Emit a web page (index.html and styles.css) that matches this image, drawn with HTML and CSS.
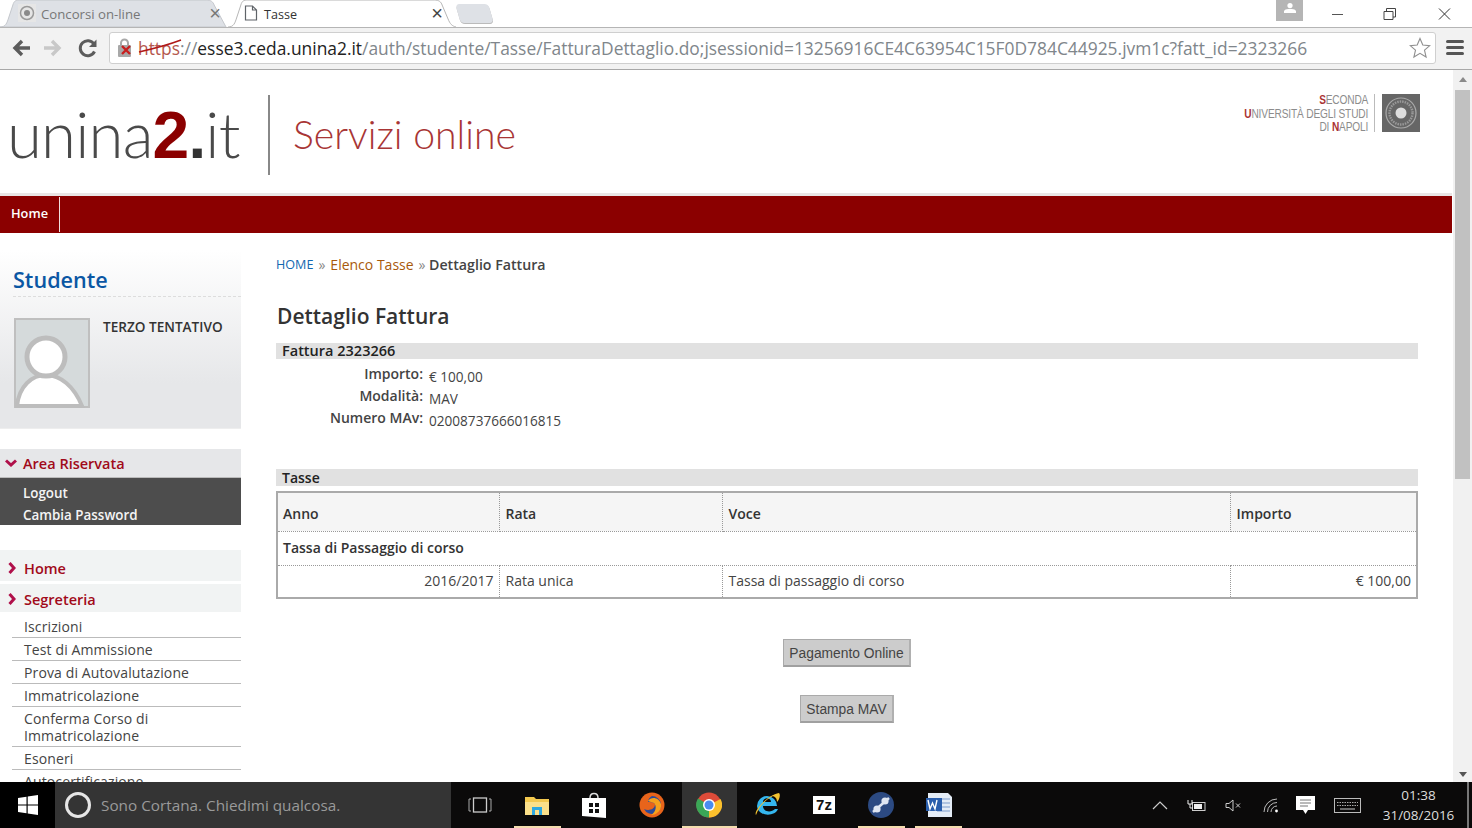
FILE: index.html
```html
<!DOCTYPE html>
<html lang="it">
<head>
<meta charset="utf-8">
<title>Tasse</title>
<link rel="stylesheet" href="styles.css">
</head>
<body>
<div class="tabstrip">
  <div class="tab tab-off">
    <svg class="tab-shape" viewBox="0 0 230 28" preserveAspectRatio="none"><path d="M0 28 C6 28 7 24 9 18 L13 6 C14 2 16 1 20 1 L208 1 C213 1 215 3 216 6 L228 28 Z" fill="#dee1e6" stroke="#c4c7cc"/></svg>
    <svg class="fav" width="18" height="18" viewBox="0 0 18 18"><rect width="18" height="18" fill="#e6e6e6"/><circle cx="9" cy="9" r="6.5" fill="none" stroke="#9a9a9a" stroke-width="1.5"/><circle cx="9" cy="9" r="3" fill="#8a8a8a"/></svg>
    <span class="tab-title">Concorsi on-line</span>
    <span class="tab-x">×</span>
  </div>
  <div class="tab tab-on">
    <svg class="tab-shape" viewBox="0 0 230 28" preserveAspectRatio="none"><path d="M0 28 C6 28 7 24 9 18 L13 6 C14 2 16 1 20 1 L208 1 C213 1 215 3 216 6 L222 20 C224 25 226 27 230 28" fill="#fff" stroke="#b5b5b5"/></svg>
    <svg class="fav" width="14" height="16" viewBox="0 0 14 16"><path d="M1.5 1 H8.5 L12.5 5 V15 H1.5 Z M8.5 1 V5 H12.5" fill="#fff" stroke="#5f6368" stroke-width="1.2"/></svg>
    <span class="tab-title">Tasse</span>
    <span class="tab-x">×</span>
  </div>
  <div class="newtab"></div>
  <div class="winctl">
    <div class="profile"><svg width="12" height="10" viewBox="0 0 12 10"><circle cx="6" cy="2.6" r="2.6" fill="#fff"/><path d="M0 10 V8 C1 6 4 6 6 6 S11 6 12 8 V10 Z" fill="#fff"/></svg></div>
    <svg class="ctl" width="53" height="28" viewBox="0 0 53 28"><path d="M21 14.5 H32" stroke="#555"/></svg>
    <svg class="ctl" width="53" height="28" viewBox="0 0 53 28"><path d="M20 11.5 H29 V19.5 H20 Z M22.5 11 V8.5 H31.5 V17 H29" fill="none" stroke="#444"/></svg>
    <svg class="ctl" width="53" height="28" viewBox="0 0 53 28"><path d="M22 8.5 L33 19.5 M33 8.5 L22 19.5" stroke="#333"/></svg>
  </div>
</div>

<div class="toolbar">
  <svg class="nav-ico" width="32" height="24" viewBox="0 0 24 24"><path d="M21 12 H7 M13 5 L6 12 L13 19" fill="none" stroke="#5c5c5c" stroke-width="3.4"/></svg>
  <svg class="nav-ico" width="32" height="24" viewBox="0 0 24 24"><path d="M3 12 H17 M11 5 L18 12 L11 19" fill="none" stroke="#c8c8c8" stroke-width="3.4"/></svg>
  <svg class="nav-ico nav-reload" width="32" height="24" viewBox="0 0 24 24"><path d="M18.5 15.5 A7.5 7.5 0 1 1 18 8" fill="none" stroke="#5c5c5c" stroke-width="3"/><path d="M20.5 3.5 V11 H13 Z" fill="#5c5c5c"/></svg>
  <div class="omnibox">
    <span class="lock">
      <svg width="18" height="20" viewBox="0 0 18 20"><rect x="1" y="7" width="13" height="12" rx="1" fill="#a8a8a8"/><path d="M4 7 V5 A3.5 3.5 0 0 1 11 5 V7" fill="none" stroke="#a8a8a8" stroke-width="2"/><path d="M5 8 L13 16 M13 8 L5 16" stroke="#c81e1e" stroke-width="2.4"/></svg>
    </span>
    <span class="url"><span class="scheme"><span class="scheme-red">https</span>://</span><span class="host">esse3.ceda.unina2.it</span>/auth/studente/Tasse/FatturaDettaglio.do;jsessionid=13256916CE4C63954C15F0D784C44925.jvm1c?fatt_id=2323266</span>
    <svg class="strike" width="44" height="14" viewBox="0 0 44 14"><path d="M1 13 C14 10 30 6 43 1" fill="none" stroke="#b01818" stroke-width="1.5"/></svg>
    <svg class="star" width="22" height="22" viewBox="0 0 22 22"><path d="M11 1.5 L13.8 8 L20.8 8.6 L15.5 13.2 L17.1 20 L11 16.4 L4.9 20 L6.5 13.2 L1.2 8.6 L8.2 8 Z" fill="#fff" stroke="#8f8f8f" stroke-width="1.1"/></svg>
  </div>
  <div class="menu"><i></i><i></i><i></i></div>
</div>

<div class="viewport">
  <div class="page">
    <header class="site-head">
      <div class="brand">
        <span class="logo">unina<b>2</b><span class="logo-dot">.</span>it</span>
        <span class="brand-sep"></span>
        <span class="brand-sub">Servizi online</span>
      </div>
      <div class="univ">
        <div class="univ-text"><span><em>S</em>ECONDA</span><span><em>U</em>NIVERSITÀ DEGLI STUDI</span><span>DI <em>N</em>APOLI</span></div>
        <span class="univ-sep"></span>
        <svg class="seal" width="38" height="38" viewBox="0 0 38 38"><rect width="38" height="38" fill="#666"/><circle cx="19" cy="19" r="15" fill="none" stroke="#aaa" stroke-width="1.2"/><circle cx="19" cy="19" r="11.5" fill="none" stroke="#999" stroke-width="2.4" stroke-dasharray="1.5 1"/><circle cx="19" cy="19" r="5.5" fill="#ddd"/></svg>
      </div>
    </header>
    <nav class="mainnav"><a class="mainnav-item">Home</a></nav>

    <div class="columns">
      <aside class="sidebar">
        <section class="student">
          <h2>Studente</h2>
          <div class="student-body">
            <svg class="avatar" width="76" height="90" viewBox="0 0 76 90"><rect x="1" y="1" width="74" height="88" fill="#d5dadb" stroke="#bfbfbf" stroke-width="2"/><path d="M3 88 C5 68 18 57 32 57 C46 57 60 68 68 88 Z" fill="#fff" stroke="#bdbdbd" stroke-width="4"/><circle cx="32" cy="39" r="19" fill="#fff" stroke="#bdbdbd" stroke-width="5"/></svg>
            <span class="student-name">TERZO TENTATIVO</span>
          </div>
        </section>

        <section class="area">
          <div class="area-head"><svg width="12" height="8" viewBox="0 0 12 8"><path d="M1 1.5 L6 6 L11 1.5" fill="none" stroke="#b0104a" stroke-width="3"/></svg>Area Riservata</div>
          <ul class="area-list"><li>Logout</li><li>Cambia Password</li></ul>
        </section>

        <div class="menu-head menu-home"><svg width="8" height="12" viewBox="0 0 8 12"><path d="M1.5 1 L6 6 L1.5 11" fill="none" stroke="#b0104a" stroke-width="3"/></svg>Home</div>
        <div class="menu-head"><svg width="8" height="12" viewBox="0 0 8 12"><path d="M1.5 1 L6 6 L1.5 11" fill="none" stroke="#b0104a" stroke-width="3"/></svg>Segreteria</div>
        <ul class="sub">
          <li>Iscrizioni</li>
          <li>Test di Ammissione</li>
          <li>Prova di Autovalutazione</li>
          <li>Immatricolazione</li>
          <li>Conferma Corso di Immatricolazione</li>
          <li>Esoneri</li>
          <li>Autocertificazione</li>
        </ul>
      </aside>

      <main class="content">
        <div class="crumbs"><a class="c-home">HOME</a><span class="c-sep">»</span><a class="c-link">Elenco Tasse</a><span class="c-sep">»</span><span class="c-now">Dettaglio Fattura</span></div>
        <h1>Dettaglio Fattura</h1>
        <div class="bar">Fattura 2323266</div>
        <dl class="fields">
          <dt>Importo:</dt><dd>€ 100,00</dd>
          <dt>Modalità:</dt><dd>MAV</dd>
          <dt>Numero MAv:</dt><dd>02008737666016815</dd>
        </dl>
        <div class="bar bar-tasse">Tasse</div>
        <table class="grid">
          <colgroup><col class="c1"><col class="c2"><col class="c3"><col class="c4"></colgroup>
          <thead><tr><th>Anno</th><th>Rata</th><th>Voce</th><th>Importo</th></tr></thead>
          <tbody>
            <tr class="group"><td colspan="4">Tassa di Passaggio di corso</td></tr>
            <tr class="item"><td class="num">2016/2017</td><td>Rata unica</td><td>Tassa di passaggio di corso</td><td class="num">€ 100,00</td></tr>
          </tbody>
        </table>
        <div class="actions">
          <button class="btn">Pagamento Online</button>
          <button class="btn">Stampa MAV</button>
        </div>
      </main>
    </div>
  </div>
  <div class="scrollbar">
    <span class="arrow up"></span>
    <div class="track"><div class="thumb"></div></div>
    <span class="arrow down"></span>
  </div>
</div>

<footer class="taskbar">
  <div class="start"><svg width="20" height="20" viewBox="0 0 20 20"><path d="M0 3 L8.5 1.8 V9.5 H0 Z M9.7 1.6 L20 0 V9.5 H9.7 Z M0 10.6 H8.5 V18.2 L0 17 Z M9.7 10.6 H20 V20 L9.7 18.4 Z" fill="#fff"/></svg></div>
  <div class="cortana"><span class="ring"></span><span class="cortana-text">Sono Cortana. Chiedimi qualcosa.</span></div>
  <div class="apps">
    <div class="app"><svg width="24" height="16" viewBox="0 0 24 16"><rect x="5.5" y="1" width="13" height="14" fill="none" stroke="#ccc" stroke-width="1.3"/><path d="M3 2 H1 V14 H3 M21 2 H23 V14 H21" fill="none" stroke="#aaa"/></svg></div>
    <div class="app app-run"><svg width="26" height="22" viewBox="0 0 26 22"><path d="M1 3 H10 L12 5 H25 V21 H1 Z" fill="#f4c94f"/><path d="M1 8 H25 V21 H1 Z" fill="#fbe08a"/><path d="M8 13 H18 V21 H15 V16 H11 V21 H8 Z" fill="#2ea8e0"/></svg></div>
    <div class="app"><svg width="26" height="28" viewBox="0 0 26 28"><path d="M9 7 C9 1 17 1 17 7" fill="none" stroke="#ddd" stroke-width="1.5"/><path d="M1 7 H25 V27 L1 25 Z" fill="#fff"/><path d="M8 12 H12 V16 H8 Z M14 12 H18 V16 H14 Z M8 18 H12 V22 H8 Z M14 18 H18 V22 H14 Z" fill="#111"/></svg></div>
    <div class="app"><svg width="26" height="26" viewBox="0 0 26 26"><circle cx="13" cy="13" r="12.5" fill="#e8641b"/><path d="M13 4 A9 9 0 1 1 5 17 C9 19 16 18 16 12 C14 10 11 10 9 10 C9 7 11 5 13 4 Z" fill="#2b4a9a"/><path d="M9 9 C12 4 20 5 22 12 C23 18 18 23 12 23 C17 20 18 14 15 11 Z" fill="#f6a11c"/></svg></div>
    <div class="app app-active"><svg width="26" height="26" viewBox="0 0 26 26"><circle cx="13" cy="13" r="12.5" fill="#dd4b39"/><path d="M13 13 L24.5 7 A12.5 12.5 0 0 1 13 25.5 Z" fill="#fbc02d"/><path d="M13 13 L13 25.5 A12.5 12.5 0 0 1 2 6.5 Z" fill="#3aa757"/><circle cx="13" cy="13" r="6" fill="#fff"/><circle cx="13" cy="13" r="4.5" fill="#4a8cf0"/></svg></div>
    <div class="app"><svg width="28" height="28" viewBox="0 0 28 28"><path d="M4 15 A10 10 0 0 1 24 15 H10 C10 21 18 22 22 18 H25 C22 26 5 26 4 15 Z M10 11 H18 C18 6 10 6 10 11 Z" fill="#35b6ee" fill-rule="evenodd"/><path d="M3 24 C0 20 16 3 26 2 C28 4 26 9 24 11 C24 7 22 6 20 5 C12 9 6 16 3 24 Z" fill="#f2c230"/></svg></div>
    <div class="app"><span class="sevenz">7z</span></div>
    <div class="app app-run"><svg width="26" height="26" viewBox="0 0 26 26"><circle cx="13" cy="13" r="13" fill="#2c4a82"/><path d="M5 20 L21 6" stroke="#dfe6f2" stroke-width="2.4"/><circle cx="9" cy="17" r="3.6" fill="#dfe6f2"/><circle cx="17" cy="9" r="3.6" fill="#dfe6f2"/></svg></div>
    <div class="app app-run"><svg width="28" height="26" viewBox="0 0 28 26"><path d="M3 1 H23 L27 5 V25 H3 Z" fill="#e4ecf6"/><path d="M12 7 H25 M12 11 H25 M12 15 H25 M12 19 H25" stroke="#7d9ccb"/><path d="M1 6 H17 V19 H1 Z" fill="#2b5fad"/><path d="M3 8 L5 17 L7.5 11 L10 17 L12 8" fill="none" stroke="#fff" stroke-width="1.4"/></svg></div>
  </div>
  <div class="tray">
    <svg width="16" height="9" viewBox="0 0 16 9"><path d="M1 8 L8 1 L15 8" fill="none" stroke="#ccc" stroke-width="1.2"/></svg>
    <svg width="19" height="13" viewBox="0 0 19 13"><rect x="5.5" y="3.5" width="12.5" height="8" fill="none" stroke="#ccc"/><rect x="7" y="5" width="8" height="5" fill="#eee"/><path d="M1 1 V5 H5 V1 M3 5 V9 H6" fill="none" stroke="#eee"/></svg>
    <svg width="17" height="13" viewBox="0 0 17 13"><path d="M1 4.5 H4 L8 1 V12 L4 8.5 H1 Z" fill="none" stroke="#ccc"/><path d="M11 4.5 L15 8.5 M15 4.5 L11 8.5" stroke="#ccc"/></svg>
    <svg class="tray-wifi" width="16" height="15" viewBox="0 0 16 15"><path d="M1 14 A13 13 0 0 1 14 1 M4.5 14 A9.5 9.5 0 0 1 14 4.5 M8 14 A6 6 0 0 1 14 8" fill="none" stroke="#bbb"/><circle cx="13.5" cy="13" r="1.4" fill="#fff"/></svg>
    <svg class="tray-msg" width="19" height="18" viewBox="0 0 19 18"><path d="M0 0 H19 V14 H12 L9.5 18 L7 14 H0 Z" fill="#fff"/><path d="M4 4 H15 M4 7 H15 M4 10 H12" stroke="#777"/></svg>
    <svg width="27" height="15" viewBox="0 0 27 15"><rect x=".5" y=".5" width="26" height="14" fill="none" stroke="#bbb"/><path d="M3 4.5 H24 M3 7.5 H24" stroke="#aaa" stroke-dasharray="1.5 1"/><path d="M6 11 H21" stroke="#ccc"/></svg>
    <div class="clock"><span>01:38</span><span>31/08/2016</span></div>
    <span class="show-desk"></span>
  </div>
</footer>
</body>
</html>
```

FILE: styles.css
```css
* { box-sizing: border-box; }
html, body { margin: 0; height: 100%; }
body {
  width: 1472px;
  height: 828px;
  overflow: hidden;
  display: flex;
  flex-direction: column;
  background: #fff;
  font-family: "Open Sans", "Noto Sans", sans-serif;
  color: #333;
}
ul { list-style: none; margin: 0; padding: 0; }
h1, h2, dl, dd { margin: 0; }

/* browser chrome */
.tabstrip {
  height: 28px;
  flex: none;
  display: flex;
  align-items: flex-end;
  background: #fff;
  border-bottom: 1px solid #b5b5b5;
}
.tab {
  position: relative;
  width: 228px;
  height: 28px;
  display: flex;
  align-items: center;
  font-size: 13.2px;
}
.tab-shape { position: absolute; inset: 0; width: 100%; height: 100%; }
.tab > *:not(.tab-shape) { position: relative; }
.tab-title { padding-top: 2px; }
.tab-off { padding: 0 3px 0 18px; color: #777; }
.tab-on { padding: 0 9px 0 16px; color: #333; }
.fav { flex: none; }
.tab-off .tab-title { margin-left: 5px; flex: 1; }
.tab-on .tab-title { margin-left: 6px; flex: 1; font-size: 12.6px; }
.tab-x { font-size: 20px; color: #777; line-height: 1; margin-right: 4px; font-family: "Liberation Sans", sans-serif; }
.tab-on .tab-x { color: #444; }
.newtab {
  width: 33px;
  height: 19px;
  margin: 0 0 4px 2px;
  background: #dee1e6;
  border-radius: 4px;
  transform: skewX(16deg);
  box-shadow: 0 1px 0 #bbb;
}
.winctl { margin-left: auto; display: flex; align-self: flex-start; height: 27px; padding-right: 2px; }
.profile {
  width: 27px;
  height: 21px;
  background: #b5b5b5;
  display: flex;
  align-items: center;
  justify-content: center;
  margin-right: 8px;
  padding-bottom: 6px;
}
.ctl { flex: none; }

.toolbar {
  height: 42px;
  flex: none;
  display: flex;
  align-items: center;
  background: #f2f2f2;
  border-bottom: 1px solid #a8a8a8;
  padding: 0 6px 2px 5px;
}
.nav-ico { flex: none; }
.nav-reload { margin-left: 3px; }
.omnibox {
  width: 1327px;
  height: 32px;
  margin-left: 5px;
  background: #fff;
  border: 1px solid #cfcfcf;
  border-radius: 3px;
  display: flex;
  align-items: center;
  padding-left: 7px;
  position: relative;
}
.lock { display: flex; width: 21px; flex: none; }
.url { font-size: 17.4px; padding-top: 1px; color: #80868b; white-space: nowrap; flex: 1; font-family: "Open Sans", sans-serif; }
.scheme-red { color: #b5584f; }
.host { color: #222; }
.strike { position: absolute; left: 28px; top: 6px; }
.star { flex: none; margin-right: 4px; }
.menu { display: flex; flex-direction: column; gap: 3px; margin-left: 10px; width: 18px; }
.menu i { display: block; height: 3px; border-radius: 2px; background: #555; }

/* page frame */
.viewport { flex: 1; min-height: 0; display: flex; overflow: hidden; }
.page { width: 1452px; flex: none; overflow: hidden; }
.scrollbar { flex: 1; background: linear-gradient(90deg, #fff 1px, #f1f1f1 1px); display: flex; flex-direction: column; align-items: center; padding: 7px 0 5px 1px; }
.track { flex: 1; width: 100%; padding: 8px 2px 0; }
.thumb { height: 389px; background: #c1c1c1; }
.arrow { width: 0; height: 0; border-left: 4px solid transparent; border-right: 4px solid transparent; }
.up { border-bottom: 5px solid #8a8a8a; }
.down { border-top: 5px solid #555; }

.site-head {
  height: 126px;
  display: flex;
  align-items: flex-start;
  justify-content: space-between;
  padding: 24px 32px 0 9px;
  border-bottom: 3px solid #e9e5e5;
}
.brand { display: flex; align-items: center; height: 82px; }
.logo {
  font-family: "Lato", sans-serif;
  font-weight: 300;
  font-size: 63.5px;
  letter-spacing: -0.8px;
  color: #4a4a4a;
  width: 235px;
  margin-left: -2px;
  white-space: nowrap;
  line-height: 1;
}
.logo b { font-family: "Liberation Sans", sans-serif; font-weight: 700; color: #8b0000; font-size: 66px; }
.logo-dot { font-family: "Liberation Sans", sans-serif; font-weight: 700; color: #333; }
.brand-sep { width: 2px; height: 80px; background: #888; margin: 0 23px 0 26px; }
.brand-sub { font-family: "Lato", sans-serif; font-weight: 300; font-size: 39.2px; color: #a83535; white-space: nowrap; padding-bottom: 3px; }
.univ { display: flex; align-items: flex-start; }
.univ-text {
  display: flex;
  flex-direction: column;
  align-items: flex-end;
  font-family: "Liberation Sans", sans-serif;
  font-size: 13.5px;
  line-height: 13.7px;
  color: #8c8c8c;
  letter-spacing: -0.2px;
  margin-top: -1px;
  transform: scaleX(.75);
  transform-origin: right center;
}
.univ-text em { font-style: normal; font-weight: 700; color: #a33; }
.univ-sep { width: 1px; height: 38px; background: #bbb; margin: 0 7px 0 6px; }
.seal { flex: none; }

.mainnav { height: 37px; background: #8b0000; display: flex; padding: 1px 0; }
.mainnav-item {
  color: #fff;
  font-size: 12.8px;
  font-weight: 600;
  padding: 0 12px 3px 11px;
  border-right: 1px solid #f0dede;
  display: flex;
  align-items: center;
  width: 60px;
}

.columns { display: flex; padding-top: 17px; }
.sidebar { width: 241px; flex: none; }
.student {
  height: 179px;
  background: linear-gradient(#fff, #e6e7e9 75%);
  padding: 0 0 0 14px;
  border-bottom: 1px solid #eee;
}
.student h2 {
  font-size: 21.6px;
  font-weight: 600;
  color: #0b57a4;
  height: 47px;
  padding-top: 14px;
  line-height: 31px;
  margin-left: -1px;
  border-bottom: 1px dashed #ddd;
}
.student-body { display: flex; padding-top: 21px; }
.avatar { flex: none; }
.student-name { margin-left: 13px; font-size: 13.6px; font-weight: 600; color: #333; line-height: 18px; }

.area { margin-top: 20px; }
.area-head {
  height: 29px;
  background: #e6e7e9;
  color: #a10a1a;
  font-size: 14.5px;
  font-weight: 600;
  display: flex;
  align-items: center;
  padding-left: 5px;
  gap: 6px;
  border-bottom: 1px solid #bbb;
}
.area-list { background: #4d4d4d; color: #f4f4f4; font-size: 13.4px; font-weight: 600; padding: 4px 0 0 23px; height: 47px; }
.area-list li { line-height: 22px; }

.menu-head {
  height: 28px;
  margin-top: 3px;
  padding-top: 2px;
  background: #f1f3f3;
  color: #a10a1a;
  font-size: 14.5px;
  font-weight: 600;
  display: flex;
  align-items: center;
  padding-left: 8px;
  gap: 8px;
}
.menu-home { margin-top: 25px; height: 31px; padding-top: 5px; }
.sub { padding: 3px 0 0 12px; font-size: 14px; letter-spacing: .12px; color: #444; }
.sub li { border-bottom: 1px solid #bbb; padding: 3px 12px 2px; line-height: 17px; }

.content { flex: 1; padding: 0 34px 0 35px; font-size: 14px; }
.crumbs { display: flex; gap: 5px; height: 29px; align-items: center; font-weight: 600; font-size: 14px; }
.c-home { color: #1367b0; font-weight: 400; font-size: 12.6px; }
.c-link { color: #a8590b; font-weight: 400; }
.c-sep { color: #888; font-weight: 400; }
.c-now { color: #444; font-size: 14.2px; margin-left: -1.5px; }
h1 { font-size: 21px; font-weight: 600; color: #333; margin: 19px 0 0 1px; line-height: 36px; height: 44px; }
.bar { background: #e1e1e1; font-weight: 600; font-size: 14.5px; height: 16px; line-height: 16px; padding-left: 6px; color: #222; margin-top: 1px; }
.bar-tasse { height: 17px; line-height: 17px; margin-top: 16px; font-size: 14px; }
.fields {
  display: grid;
  grid-template-columns: 147px 1fr;
  column-gap: 6px;
  grid-auto-rows: 22px;
  padding-top: 5px;
  height: 94px;
}
.fields dt { text-align: right; font-weight: 600; color: #444; line-height: 20px; }
.fields dd { line-height: 25px; font-size: 13.6px; color: #444; }
.grid {
  width: 100%;
  table-layout: fixed;
  border-collapse: collapse;
  border: 2px solid #aaa;
  margin-top: 5px;
}
.c1 { width: 222px; }
.c2 { width: 223px; }
.c4 { width: 187px; }
.grid th, .grid td { border: 1px dotted #999; padding: 0 5px 0 6px; text-align: left; }
.grid th:first-child, .grid td:first-child { padding-left: 5px; }
.grid th { background: #f5f5f5; height: 39px; font-weight: 600; padding-top: 4px; }
.grid .group td { height: 34px; font-weight: 600; background: #fff; padding-bottom: 2px; }
.grid .item td { height: 33px; color: #444; padding-bottom: 2px; }
.grid .num { text-align: right; }
.actions { display: flex; flex-direction: column; align-items: center; gap: 28px; margin-top: 40px; }
.btn {
  height: 28px;
  padding: 1px 5.5px 0;
  background: #ccc;
  border: 1px solid #aaa;
  border-bottom: 2px solid #a0a0a0;
  border-right: 2px solid #b0b0b0;
  font-family: "Liberation Sans", sans-serif;
  font-size: 13.8px;
  color: #444;
}

/* taskbar */
.taskbar {
  height: 46px;
  flex: none;
  display: flex;
  align-items: stretch;
  background: #0b0a0a;
}
.start { width: 55px; background: #000; display: flex; align-items: center; justify-content: center; }
.cortana { width: 396px; background: #343434; display: flex; align-items: center; padding-left: 10px; gap: 10px; }
.ring { width: 26px; height: 26px; border: 3px solid #e6e6e6; border-radius: 50%; flex: none; }
.cortana-text { color: #9a9a9a; font-size: 15.3px; white-space: nowrap; }
.apps { display: flex; }
.app { width: 57.4px; display: flex; align-items: center; justify-content: center; }
.app-run { background: linear-gradient(#f3dcae, #f3dcae) center bottom / 47px 2px no-repeat; }
.app-active { background: linear-gradient(#f3dcae, #f3dcae) center bottom / 55px 2px no-repeat, linear-gradient(#333, #333) center / 55px 100% no-repeat; }
.sevenz {
  background: #fff;
  color: #111;
  font-family: "Liberation Sans", sans-serif;
  font-weight: 700;
  font-size: 15px;
  line-height: 18px;
  width: 22px;
  text-align: center;
}
.tray { flex: 1; display: flex; align-items: center; color: #ddd; padding-left: 184px; gap: 19px; }
.tray-wifi { margin-left: 2px; }
.tray-msg { margin-left: -2px; }
.clock { display: flex; flex-direction: column; align-items: center; font-size: 13.5px; line-height: 20px; margin-left: 1px; width: 76px; }
.show-desk { width: 2px; height: 46px; background: #777; margin-left: -9px; }
```
